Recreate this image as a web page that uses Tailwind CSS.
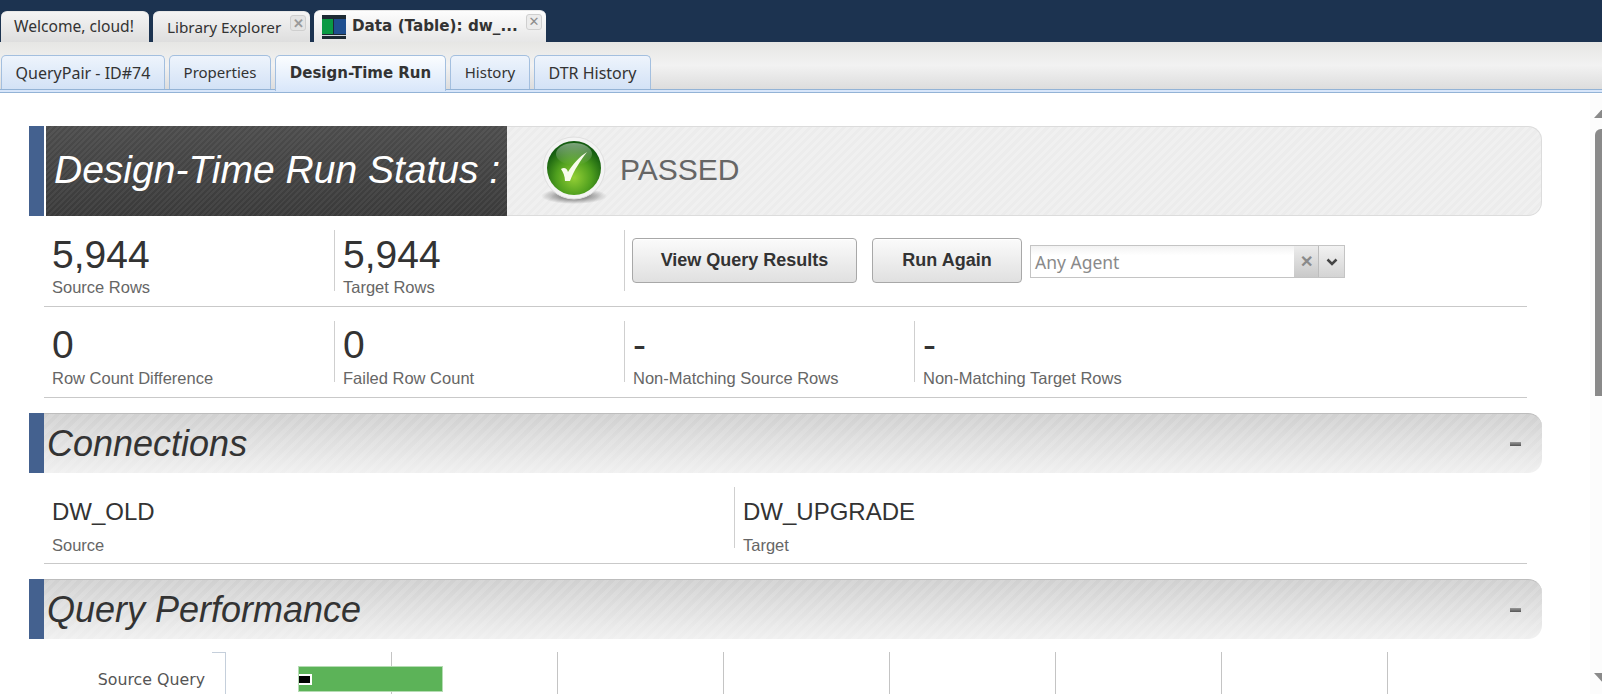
<!DOCTYPE html>
<html lang="en">
<head>
  <meta charset="UTF-8">
  <title>Design-Time Run</title>
  <script src="https://cdn.jsdelivr.net/npm/@tailwindcss/browser@4"></script>
</head>
<body class="bg-white overflow-hidden font-['Liberation_Sans',Arial,sans-serif]">
  <div class="relative w-[1602px] h-[694px] overflow-hidden">

    <!-- Top tabs -->
    <nav class="h-[42px] bg-[#1c3350] flex items-end pl-[1px] gap-[4px] font-['Noto_Sans',sans-serif] text-[15px] text-[#333]">
      <div class="w-[148px] h-[31px] rounded-t-[6px] border-t border-[#e8e8e8] bg-gradient-to-b from-[#f4f4f4] to-[#dedede] flex items-center pl-[13px] text-[15.6px]">Welcome, cloud!</div>
      <div class="relative w-[157px] h-[31px] rounded-t-[6px] border-t border-[#e8e8e8] bg-gradient-to-b from-[#f4f4f4] to-[#dedede] flex items-center pl-[14px] text-[15.3px]">
        Library Explorer
        <span class="absolute right-[4px] top-[3px] w-[16px] h-[16px] rounded-[3px] bg-[#e4e4e4] border border-[#cfcfcf] text-[#9a9a9a] text-[13px] leading-[14px] text-center font-bold">&#10005;</span>
      </div>
      <div class="relative w-[232px] h-[32px] rounded-t-[6px] border-t border-[#e8e8e8] bg-gradient-to-b from-[#fdfdfd] to-[#e6e6e6] flex items-center pl-[8px] gap-[6px] font-['DejaVu_Sans',sans-serif] font-bold text-[15.2px]">
        <svg width="24" height="24" viewBox="0 0 24 24">
          <rect width="24" height="24" fill="#1d2a33"/>
          <rect x="0" y="4" width="11" height="15" fill="#0a9a43"/>
          <rect x="12" y="4" width="12" height="15" fill="#1f4f8f"/>
          <rect x="0" y="20" width="24" height="1" fill="#cfd6dc"/>
        </svg>
        Data (Table): dw_...
        <span class="absolute right-[4px] top-[3px] w-[16px] h-[16px] rounded-[3px] bg-[#ececec] border border-[#cfcfcf] text-[#8c8c8c] text-[13px] leading-[14px] text-center font-bold">&#10005;</span>
      </div>
    </nav>

    <!-- Sub tabs -->
    <div class="h-[47px] pt-[13px] pl-[1px] flex items-end gap-[4px] bg-gradient-to-b from-[#e6e6e4] via-[#f2f2f2] to-[#dddddd] font-['Noto_Sans',sans-serif] text-[15px] text-[#333]">
      <div class="w-[164px] h-[34px] rounded-t-[5px] border border-b-0 border-[#a3bfdf] bg-gradient-to-b from-[#eef4fc] to-[#d3e2f6] flex items-center justify-center text-[16px]">QueryPair - ID#74</div>
      <div class="w-[102px] h-[34px] rounded-t-[5px] border border-b-0 border-[#a3bfdf] bg-gradient-to-b from-[#eef4fc] to-[#d3e2f6] flex items-center justify-center">Properties</div>
      <div class="w-[171px] h-[36px] -mb-[2px] rounded-t-[5px] border border-b-0 border-[#a3bfdf] bg-gradient-to-b from-[#fbfdff] to-[#d9e7fa] flex items-center justify-center font-['DejaVu_Sans',sans-serif] font-bold text-[15px] relative z-10">Design-Time Run</div>
      <div class="w-[80px] h-[34px] rounded-t-[5px] border border-b-0 border-[#a3bfdf] bg-gradient-to-b from-[#eef4fc] to-[#d3e2f6] flex items-center justify-center">History</div>
      <div class="w-[117px] h-[34px] rounded-t-[5px] border border-b-0 border-[#a3bfdf] bg-gradient-to-b from-[#eef4fc] to-[#d3e2f6] flex items-center justify-center text-[16px]">DTR History</div>
    </div>
    <div class="h-[4px] bg-[#d8e6fa] border-t border-b border-[#93b3d6]"></div>

    <!-- Page content -->
    <main class="pl-[29px] w-[1542px] pt-[33px]">

      <!-- Status banner -->
      <section class="flex h-[90px]">
        <div class="w-[15px] bg-[#44618f]"></div>
        <div class="w-[461px] ml-[2px] bg-[repeating-linear-gradient(135deg,rgba(255,255,255,0.05)_0_2px,transparent_2px_4px),linear-gradient(to_bottom,#4c4c4c,#3a3a3a)] flex items-center pl-[8px] pb-[1px] text-white italic text-[39px] whitespace-nowrap">Design-Time Run Status :</div>
        <div class="flex-1 flex items-center rounded-r-[14px] border border-l-0 border-[#dcdcdc] bg-[repeating-linear-gradient(135deg,#f0f0f0_0_3px,#ececec_3px_6px)]">
          <svg class="ml-[22px] shrink-0" width="90" height="88" viewBox="0 0 90 88">
            <defs>
              <radialGradient id="ball" cx="50%" cy="68%" r="60%">
                <stop offset="0" stop-color="#93cf35"/>
                <stop offset="0.55" stop-color="#4f9f1e"/>
                <stop offset="1" stop-color="#145c10"/>
              </radialGradient>
              <radialGradient id="shadow" cx="50%" cy="50%" r="50%">
                <stop offset="0" stop-color="#4a4a4a"/>
                <stop offset="1" stop-color="#555" stop-opacity="0"/>
              </radialGradient>
              <linearGradient id="gloss" x1="0" y1="0" x2="0" y2="1">
                <stop offset="0" stop-color="#ffffff" stop-opacity="0.45"/>
                <stop offset="1" stop-color="#ffffff" stop-opacity="0"/>
              </linearGradient>
            </defs>
            <ellipse cx="45" cy="69" rx="33" ry="8" fill="url(#shadow)"/>
            <circle cx="45" cy="41" r="31" fill="#f4f4f4" stroke="#e0e0e0"/>
            <circle cx="45" cy="41" r="27" fill="url(#ball)"/>
            <ellipse cx="45" cy="27" rx="18" ry="11" fill="url(#gloss)"/>
            <path d="M32 42 C35 40 38 41 39 45 C44 37 50 30 58 25 C52 33 45 43 41 54 L36 54 C36 49 34 45 32 42 Z" fill="#f8fcec"/>
          </svg>
          <span class="ml-[1px] -mt-[4px] text-[30px] text-[#666]">PASSED</span>
        </div>
      </section>

      <!-- Row counts -->
      <section class="ml-[15px] mr-[15px] h-[91px] pt-[14px] border-b border-[#c9c9c9] flex">
        <div class="w-[290px] h-[61px] pl-[8px] pt-[3px]">
          <div class="text-[39px] leading-[43px] text-[#333]">5,944</div>
          <div class="text-[16.5px] leading-[18px] mt-[2px] text-[#666]">Source Rows</div>
        </div>
        <div class="w-[290px] h-[61px] pl-[8px] pt-[3px] border-l border-[#cfcfcf]">
          <div class="text-[39px] leading-[43px] text-[#333]">5,944</div>
          <div class="text-[16.5px] leading-[18px] mt-[2px] text-[#666]">Target Rows</div>
        </div>
        <div class="h-[61px] pl-[7px] border-l border-[#cfcfcf] flex items-start">
          <button class="w-[225px] h-[45px] mt-[8px] rounded-[4px] border border-[#a8a8a8] shadow-[inset_0_1px_0_#fff] bg-gradient-to-b from-[#fbfbfb] to-[#e0e0e0] text-[18px] font-bold text-[#333]">View Query Results</button>
          <button class="w-[150px] h-[45px] mt-[8px] ml-[15px] rounded-[4px] border border-[#a8a8a8] shadow-[inset_0_1px_0_#fff] bg-gradient-to-b from-[#fbfbfb] to-[#e0e0e0] text-[18px] font-bold text-[#333]">Run Again</button>
          <div class="w-[315px] h-[33px] mt-[15px] ml-[8px] border border-[#c4c4c4] flex bg-gradient-to-b from-[#f2f2f2] to-white to-30%">
            <span class="flex-1 pl-[4px] text-[17.5px] leading-[32px] text-[#8a8a8a] font-['Noto_Sans',sans-serif]">Any Agent</span>
            <span class="w-[25px] bg-gradient-to-b from-[#ececec] to-[#c9c9c9] border-r border-[#bdbdbd] text-center text-[#8a8a8a] text-[16px] leading-[31px] font-bold">&#10005;</span>
            <span class="w-[25px] bg-gradient-to-b from-[#f2f2f2] to-[#d4d4d4] flex items-center justify-center">
              <svg width="12" height="8" viewBox="0 0 12 8"><path d="M1.5 1.5 L6 6 L10.5 1.5" fill="none" stroke="#444" stroke-width="2.5"/></svg>
            </span>
          </div>
        </div>
      </section>

      <!-- Row differences -->
      <section class="ml-[15px] mr-[15px] h-[91px] pt-[14px] border-b border-[#c9c9c9] flex">
        <div class="w-[290px] h-[61px] pl-[8px] pt-[2px]">
          <div class="text-[39px] leading-[43px] text-[#333]">0</div>
          <div class="text-[16.5px] leading-[18px] mt-[3px] text-[#666]">Row Count Difference</div>
        </div>
        <div class="w-[290px] h-[61px] pl-[8px] pt-[2px] border-l border-[#cfcfcf]">
          <div class="text-[39px] leading-[43px] text-[#333]">0</div>
          <div class="text-[16.5px] leading-[18px] mt-[3px] text-[#666]">Failed Row Count</div>
        </div>
        <div class="w-[290px] h-[61px] pl-[8px] pt-[2px] border-l border-[#cfcfcf]">
          <div class="text-[39px] leading-[43px] text-[#333]">-</div>
          <div class="text-[16.5px] leading-[18px] mt-[3px] text-[#666]">Non-Matching Source Rows</div>
        </div>
        <div class="w-[290px] h-[61px] pl-[8px] pt-[2px] border-l border-[#cfcfcf]">
          <div class="text-[39px] leading-[43px] text-[#333]">-</div>
          <div class="text-[16.5px] leading-[18px] mt-[3px] text-[#666]">Non-Matching Target Rows</div>
        </div>
      </section>

      <!-- Connections -->
      <section class="mt-[15px] flex h-[60px]">
        <div class="w-[15px] bg-[#44618f]"></div>
        <div class="flex-1 flex items-center justify-between rounded-r-[14px] border-t border-[#bdbdbd] bg-[repeating-linear-gradient(135deg,transparent_0_4px,rgba(255,255,255,0.12)_4px_8px),linear-gradient(to_bottom,#d0d0d0,#f0f0f0)] pl-[3px] pr-[21px]">
          <span class="italic text-[36px] text-[#333]">Connections</span>
          <span class="w-[11px] h-[4px] bg-gradient-to-b from-[#9a9a9a] to-[#555]"></span>
        </div>
      </section>
      <section class="ml-[15px] mr-[15px] h-[91px] pt-[14px] border-b border-[#c9c9c9] flex">
        <div class="w-[690px] pl-[8px] pt-[9px]">
          <div class="text-[24px] leading-[32px] text-[#333]">DW_OLD</div>
          <div class="text-[16.5px] leading-[18px] mt-[8px] text-[#666]">Source</div>
        </div>
        <div class="h-[61px] pl-[8px] pt-[9px] border-l border-[#cfcfcf]">
          <div class="text-[24px] leading-[32px] text-[#333]">DW_UPGRADE</div>
          <div class="text-[16.5px] leading-[18px] mt-[8px] text-[#666]">Target</div>
        </div>
      </section>

      <!-- Query Performance -->
      <section class="mt-[15px] flex h-[60px]">
        <div class="w-[15px] bg-[#44618f]"></div>
        <div class="flex-1 flex items-center justify-between rounded-r-[14px] border-t border-[#bdbdbd] bg-[repeating-linear-gradient(135deg,transparent_0_4px,rgba(255,255,255,0.12)_4px_8px),linear-gradient(to_bottom,#d0d0d0,#f0f0f0)] pl-[3px] pr-[21px]">
          <span class="italic text-[36px] text-[#333]">Query Performance</span>
          <span class="w-[11px] h-[4px] bg-gradient-to-b from-[#9a9a9a] to-[#555]"></span>
        </div>
      </section>
      <section class="relative mt-[13px] h-[60px] flex items-start">
        <div class="w-[176px] pt-[18px] text-right font-['DejaVu_Sans',sans-serif] text-[15.8px] leading-[20px] text-[#555]">Source Query</div>
        <div class="ml-[7px] w-[14px] h-[60px] border-t border-r border-[#c5cfdb]"></div>
        <div class="flex-1 relative h-[60px]">
          <!-- grid lines -->
          <div class="absolute inset-0 flex pl-[165px]">
            <div class="w-[166px] shrink-0 border-l border-[#c4c4c4]"></div>
            <div class="w-[166px] shrink-0 border-l border-[#c4c4c4]"></div>
            <div class="w-[166px] shrink-0 border-l border-[#c4c4c4]"></div>
            <div class="w-[166px] shrink-0 border-l border-[#c4c4c4]"></div>
            <div class="w-[166px] shrink-0 border-l border-[#c4c4c4]"></div>
            <div class="w-[166px] shrink-0 border-l border-[#c4c4c4]"></div>
            <div class="w-[166px] shrink-0 border-l border-[#c4c4c4]"></div>
          </div>
          <div class="absolute left-[72px] top-[14px] w-[145px] h-[26px] bg-[#5cb358] border border-[#b5dcb3] flex items-center">
            <div class="w-[11px] h-[7px] bg-black border-[2px] border-l-0 border-white box-content"></div>
          </div>
        </div>
      </section>
    </main>

    <!-- Scrollbar -->
    <div class="absolute right-0 top-[94px] bottom-0 w-[12px] bg-[#fcfcfc]">
      <div class="absolute right-[-12px] top-[13px] w-0 h-0 border-l-[10px] border-r-[10px] border-b-[11px] border-l-transparent border-r-transparent border-b-[#8a8a8a]"></div>
      <div class="absolute right-0 left-[5px] top-[35px] h-[267px] rounded-tl-[6px] bg-[#8a8a8a]"></div>
      <div class="absolute right-[-12px] bottom-[10px] w-0 h-0 border-l-[10px] border-r-[10px] border-t-[11px] border-l-transparent border-r-transparent border-t-[#8a8a8a]"></div>
    </div>
  </div>
</body>
</html>
